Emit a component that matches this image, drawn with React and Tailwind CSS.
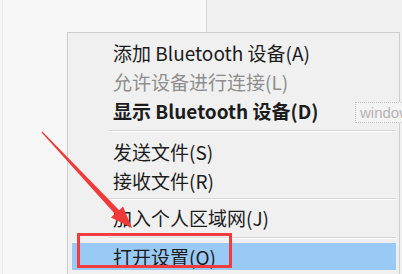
import React from "react";

const items = [
  { label: "添加 Bluetooth 设备(A)" },
  { label: "允许设备进行连接(L)", disabled: true },
  { label: "显示 Bluetooth 设备(D)", bold: true },
  { sep: true, h: "h-[12px]" },
  { label: "发送文件(S)" },
  { label: "接收文件(R)" },
  { sep: true, h: "h-[8px]" },
  { label: "加入个人区域网(J)" },
  { sep: true, h: "h-[11px]" },
  { label: "打开设置(O)", active: true },
];

const MenuItem = ({ item }) => {
  if (item.sep) {
    return (
      <div className={`${item.h} ml-[40px] mr-[3px] flex flex-col justify-center`}>
        <div className="h-px bg-[#d7d7d7]"></div>
        <div className="h-px bg-white"></div>
      </div>
    );
  }
  return (
    <div
      className={`mx-[4px] mr-[3px] pl-[41px] flex items-center ${
        item.active ? "h-[27px] bg-[#99c9f5]" : "h-[29px]"
      } ${item.disabled ? "text-[#8e8e8e]" : "text-[#1c1c1c]"} ${
        item.bold ? "font-bold" : ""
      }`}
    >
      <span className="text-[19px] leading-none whitespace-nowrap">{item.label}</span>
    </div>
  );
};

export default function App() {
  return (
    <div
      className="relative w-[402px] h-[274px] overflow-hidden bg-[#f7f7f7]"
      style={{ fontFamily: '"Noto Sans CJK SC", "Noto Sans", sans-serif' }}
    >
      {/* desktop behind the menu */}
      <div className="flex h-full">
        <div className="w-[204px] border-l border-[#e8e8e8] ml-[2px]"></div>
        <div className="flex-1 border-l border-[#d8d8d8] bg-[#f0f0f0]"></div>
      </div>

      {/* context menu */}
      <div className="absolute left-[67px] top-[32px] w-[333px] h-[250px] bg-[#f0f0f0] border-t border-l border-r border-[#cdcdcd] pt-[5px]">
        {items.map((item, i) => (
          <MenuItem key={i} item={item} />
        ))}
      </div>

      {/* watermark box */}
      <div className="absolute left-[355px] top-[102px] w-[60px] h-[21px] border border-dotted border-[#c2c2c2] bg-[#f3f3f3] flex items-center pl-[4px]">
        <span
          className="text-[15px] leading-none text-[#b4b4b4]"
          style={{ fontFamily: '"Liberation Sans", Arial, sans-serif' }}
        >
          window
        </span>
      </div>

      {/* red highlight box */}
      <div className="absolute left-[77px] top-[233px] w-[155px] h-[35px] border-[3px] border-[#f03c3c]"></div>

      {/* red arrow */}
      <svg className="absolute inset-0 pointer-events-none" width="402" height="274" viewBox="0 0 402 274">
        <polygon
          points="41.6,132.4 42.4,131.6 119.2,210.2 123,206.6 132,228 111,217.4 114.8,213.8"
          fill="#f03a3a"
        />
      </svg>
    </div>
  );
}
